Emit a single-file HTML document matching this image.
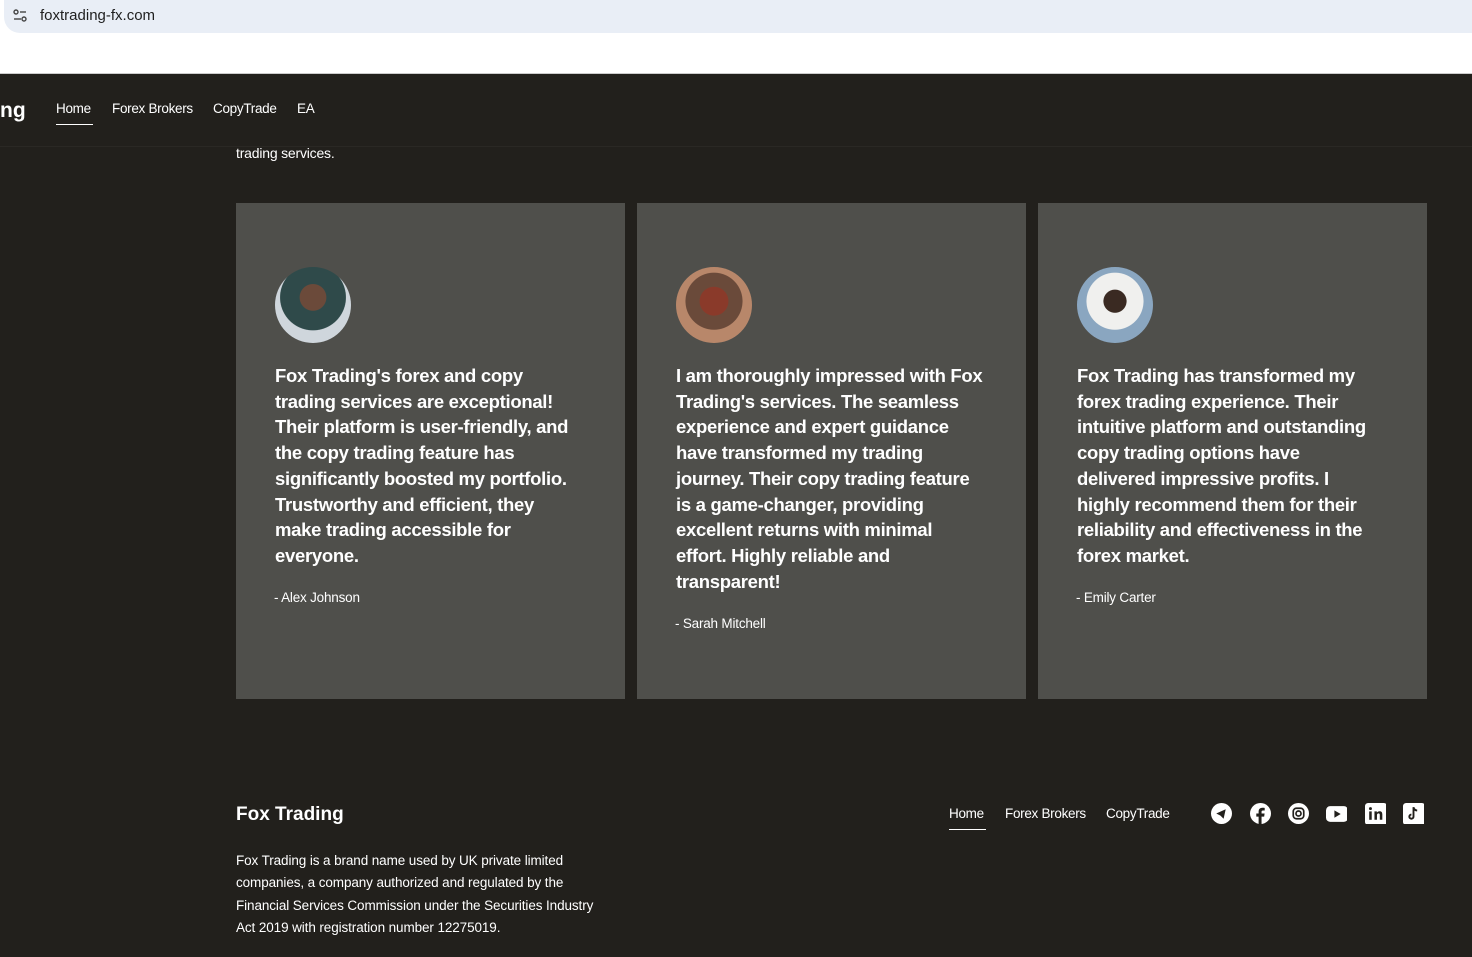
<!DOCTYPE html>
<html><head><meta charset="utf-8"><style>
*{margin:0;padding:0;box-sizing:border-box}
body{width:1472px;height:957px;overflow:hidden;background:#22201c;font-family:"Liberation Sans",sans-serif;color:#fff;position:relative}
.bar{position:absolute;left:0;top:0;width:1472px;height:74px;background:#fff;border-bottom:1px solid #ccc}
.pill{position:absolute;left:4px;top:0;width:1480px;height:33px;background:#e9eef6;border-radius:0 0 0 16px}
.url{position:absolute;left:40px;top:7px;font-size:15px;color:#1f1f1f}
.nav{position:absolute;top:101px;font-size:13.5px;letter-spacing:-0.3px;color:#fff}
.sep{position:absolute;left:0;top:146px;width:1472px;height:1px;background:#2a2824}
.card{position:absolute;top:203px;width:389px;height:496px;background:#4f4f4b}
.av{position:absolute;left:39px;top:64px;width:76px;height:76px;border-radius:50%;background:radial-gradient(circle at 50% 40%,#6b4a3a 0 22%,#2f4a4a 23% 55%,#cfd6dc 56% 100%)}
.q{position:absolute;left:39px;top:160px;font-size:18.5px;font-weight:bold;line-height:25.7px;white-space:nowrap;letter-spacing:-0.3px}
.n{position:absolute;left:38px;font-size:13.5px;letter-spacing:-0.2px}
.foot{position:absolute;font-size:13.5px;letter-spacing:-0.3px}
.ic{position:absolute;top:803px;width:21px;height:21px}
</style></head><body>
<div class="bar"><div class="pill"></div>
<svg style="position:absolute;left:13px;top:9px" width="14" height="14" viewBox="0 0 14 14" fill="none" stroke="#444" stroke-width="1.4"><circle cx="3" cy="3" r="2"/><line x1="7" y1="3" x2="13" y2="3"/><circle cx="11" cy="10" r="2"/><line x1="1" y1="10" x2="8" y2="10"/></svg>
<div class="url">foxtrading-fx.com</div></div>
<div style="position:absolute;left:0;top:99px;font-size:21px;font-weight:bold">ng</div>
<div class="nav" style="left:56px">Home</div>
<div style="position:absolute;left:56px;top:124px;width:37px;height:1px;background:#fff"></div>
<div class="nav" style="left:112px">Forex Brokers</div>
<div class="nav" style="left:213px">CopyTrade</div>
<div class="nav" style="left:297px">EA</div>
<div class="sep"></div>
<div style="position:absolute;left:236px;top:145px;font-size:14px;letter-spacing:-0.2px">trading services.</div>

<div class="card" style="left:236px"><div class="av"></div>
<div class="q">Fox Trading's forex and copy<br>trading services are exceptional!<br>Their platform is user-friendly, and<br>the copy trading feature has<br>significantly boosted my portfolio.<br>Trustworthy and efficient, they<br>make trading accessible for<br>everyone.</div>
<div class="n" style="top:387px">- Alex Johnson</div></div>

<div class="card" style="left:637px"><div class="av" style="background:radial-gradient(circle at 50% 45%,#8a3a2a 0 25%,#6a4a3a 26% 50%,#b8876a 51% 100%)"></div>
<div class="q">I am thoroughly impressed with Fox<br>Trading's services. The seamless<br>experience and expert guidance<br>have transformed my trading<br>journey. Their copy trading feature<br>is a game-changer, providing<br>excellent returns with minimal<br>effort. Highly reliable and<br>transparent!</div>
<div class="n" style="top:413px">- Sarah Mitchell</div></div>

<div class="card" style="left:1038px"><div class="av" style="background:radial-gradient(circle at 50% 45%,#3a2a22 0 20%,#f0f0ee 21% 50%,#8aa6c0 51% 100%)"></div>
<div class="q">Fox Trading has transformed my<br>forex trading experience. Their<br>intuitive platform and outstanding<br>copy trading options have<br>delivered impressive profits. I<br>highly recommend them for their<br>reliability and effectiveness in the<br>forex market.</div>
<div class="n" style="top:387px">- Emily Carter</div></div>

<div class="foot" style="left:236px;top:804px;font-size:19px;font-weight:bold;letter-spacing:0">Fox Trading</div>
<div class="foot" style="left:236px;top:850px;font-size:13.5px;line-height:22.3px;letter-spacing:-0.1px">Fox Trading is a brand name used by UK private limited<br>companies, a company authorized and regulated by the<br>Financial Services Commission under the Securities Industry<br>Act 2019 with registration number 12275019.</div>
<div class="foot" style="left:949px;top:806px">Home</div>
<div style="position:absolute;left:949px;top:829px;width:37px;height:1px;background:#fff"></div>
<div class="foot" style="left:1005px;top:806px">Forex Brokers</div>
<div class="foot" style="left:1106px;top:806px">CopyTrade</div>
<svg class="ic" style="left:1211px" viewBox="0 0 20 20"><circle cx="10" cy="10" r="10" fill="#fff"/><path d="M5 10l9-4-2 9-3-3z" fill="#22201c"/></svg>
<svg class="ic" style="left:1250px" viewBox="0 0 20 20"><circle cx="10" cy="10" r="10" fill="#fff"/><path d="M11 20v-7h2.5l.4-3H11V8.5c0-.8.3-1.3 1.4-1.3H14V4.6c-.3 0-1.2-.1-2.2-.1-2.2 0-3.6 1.300-3.6 3.7V10H6v3h2.2v7z" fill="#22201c"/></svg>
<svg class="ic" style="left:1288px" viewBox="0 0 20 20"><circle cx="10" cy="10" r="10" fill="#fff"/><rect x="5" y="5" width="10" height="10" rx="3" fill="none" stroke="#22201c" stroke-width="1.6"/><circle cx="10" cy="10" r="2.4" fill="none" stroke="#22201c" stroke-width="1.6"/></svg>
<svg class="ic" style="left:1326px" viewBox="0 0 20 20"><rect x="0" y="3" width="21" height="15" rx="4" fill="#fff"/><path d="M8 7v7l6-3.5z" fill="#22201c"/></svg>
<svg class="ic" style="left:1365px" viewBox="0 0 20 20"><rect width="21" height="21" rx="3" fill="#fff"/><rect x="4" y="8" width="2.4" height="8" fill="#22201c"/><circle cx="5.2" cy="5.3" r="1.4" fill="#22201c"/><path d="M9 8h2.3v1.2c.5-.9 1.5-1.4 2.6-1.4 2 0 2.6 1.2 2.6 3.2V16h-2.4v-4.5c0-1-.3-1.6-1.2-1.6s-1.5.6-1.5 1.7V16H9z" fill="#22201c"/></svg>
<svg class="ic" style="left:1403px" viewBox="0 0 20 20"><rect width="21" height="21" rx="3" fill="#fff"/><path d="M10 4v9a2 2 0 1 1-2-2" fill="none" stroke="#22201c" stroke-width="1.8"/><path d="M10 4c.3 2 1.5 3 3.5 3.2" fill="none" stroke="#22201c" stroke-width="1.8"/></svg>
</body></html>
